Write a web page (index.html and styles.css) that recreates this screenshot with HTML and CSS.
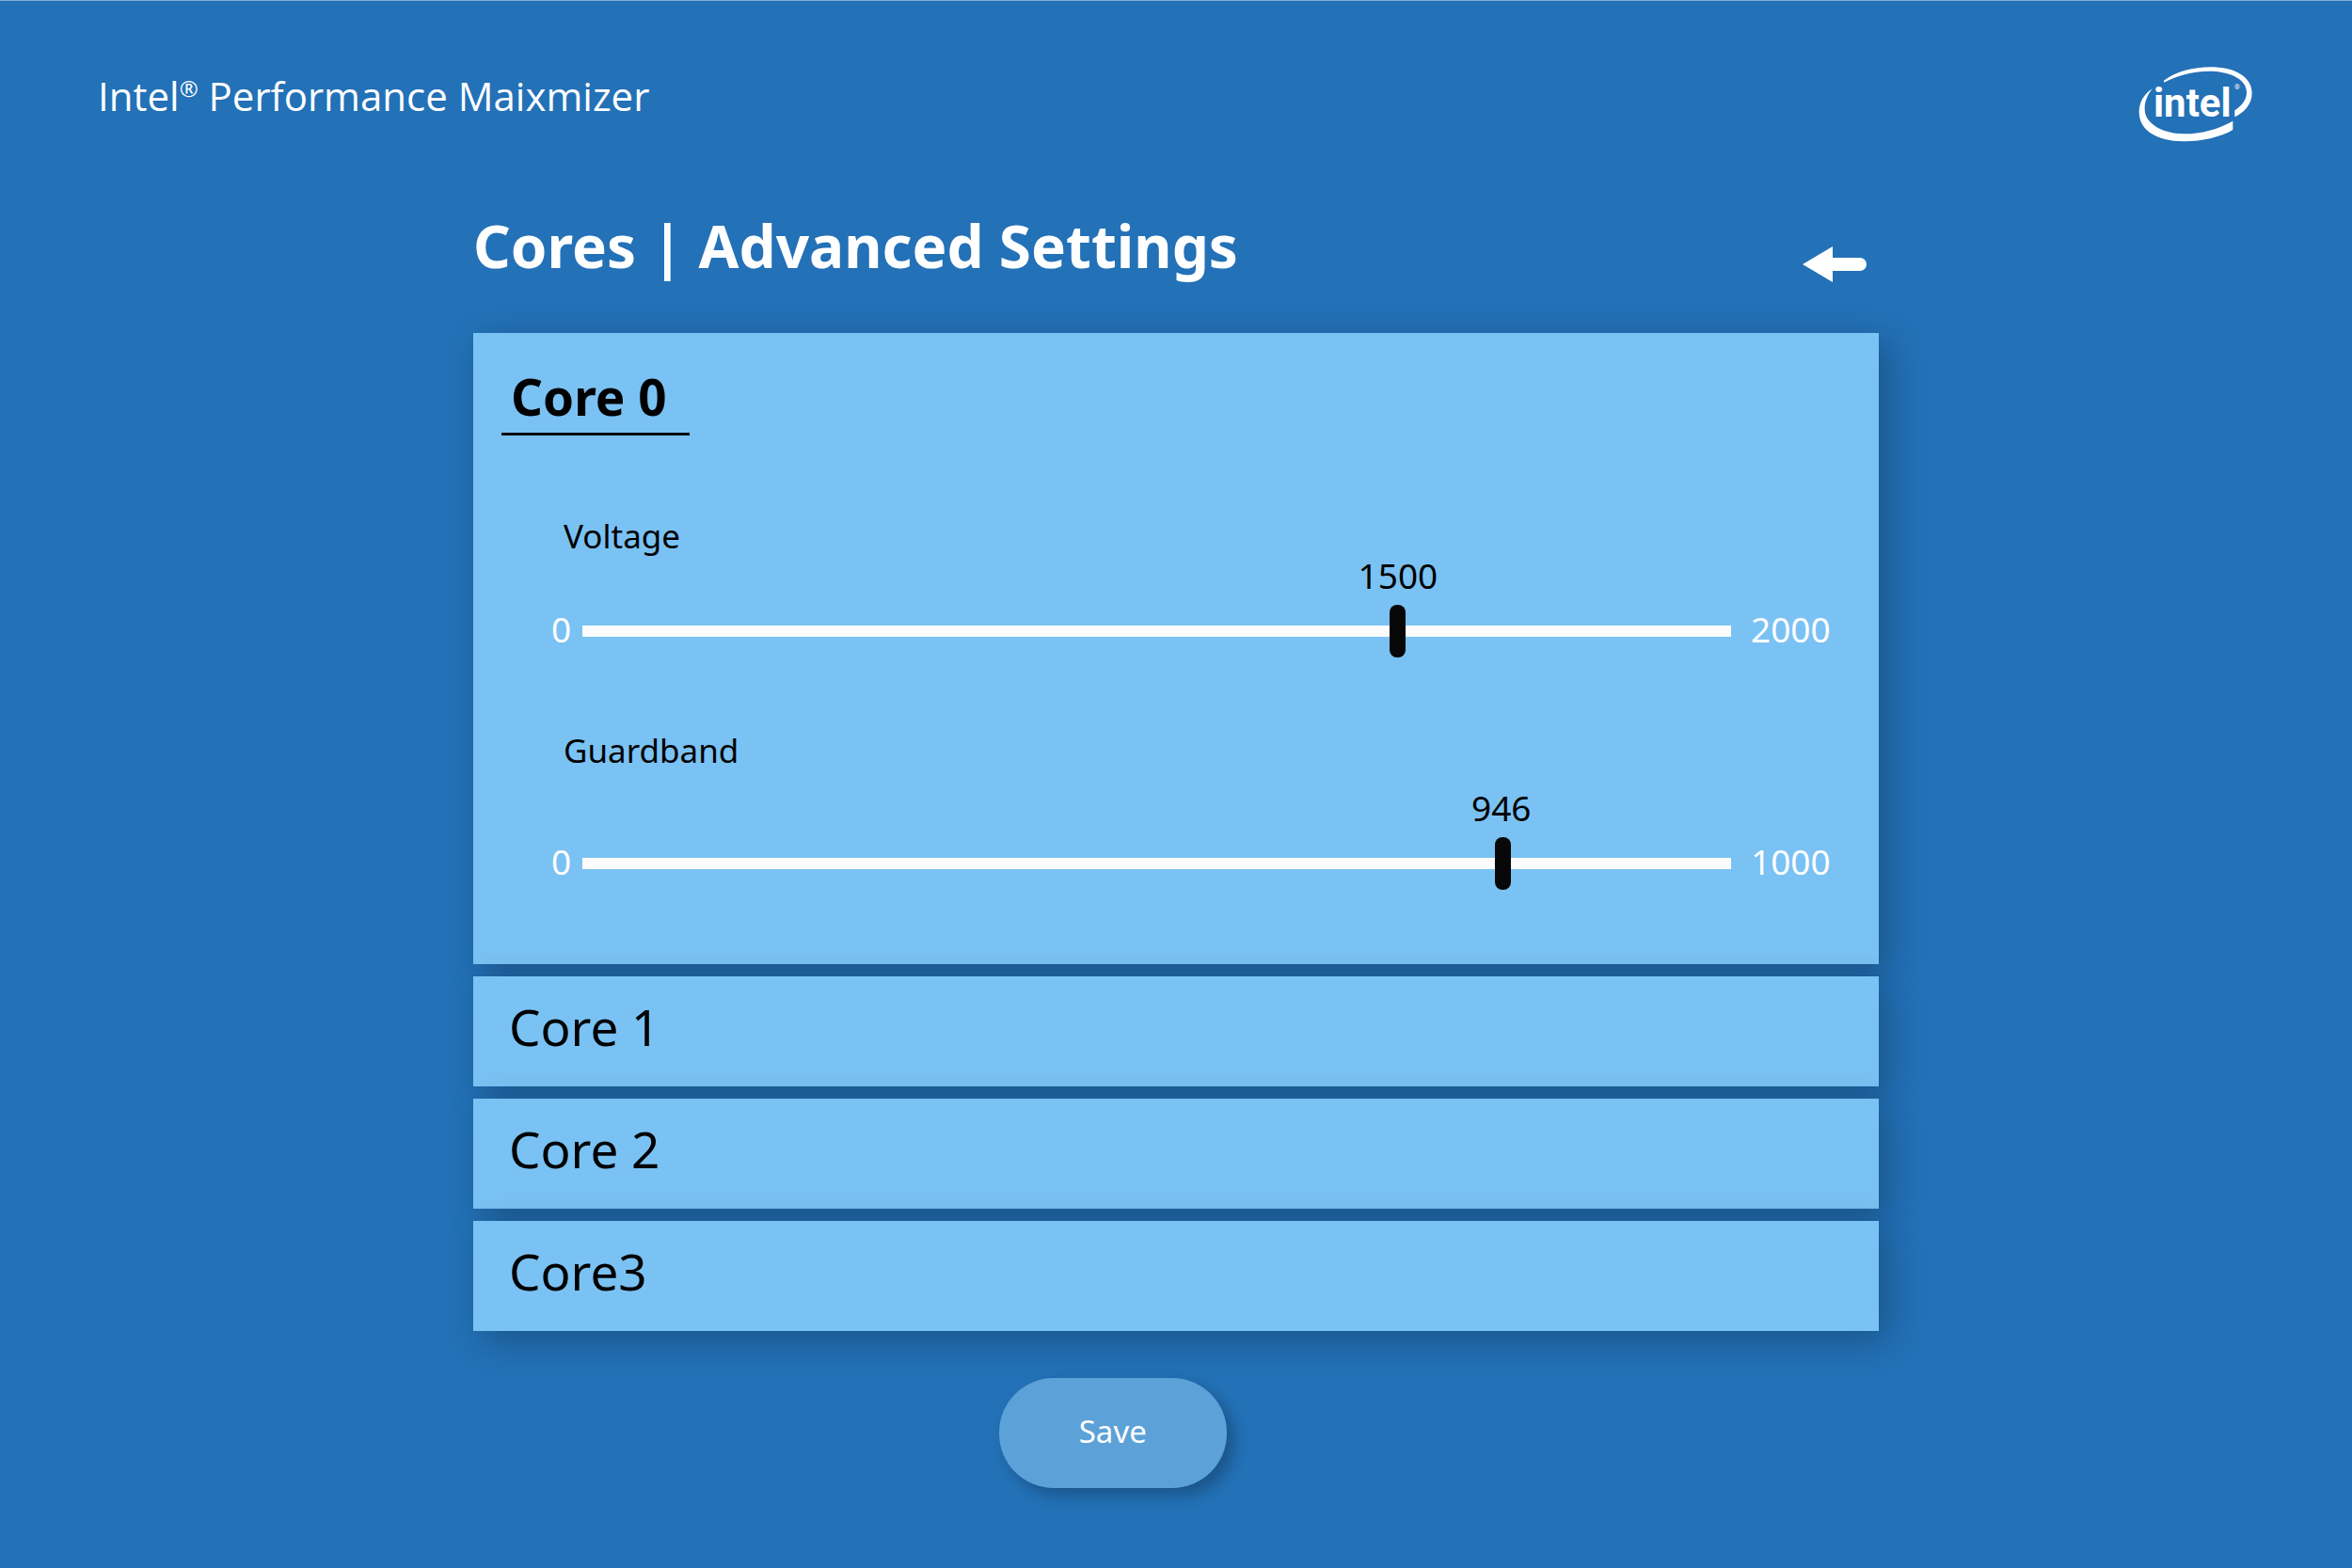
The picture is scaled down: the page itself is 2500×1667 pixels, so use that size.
FILE: index.html
```
<!DOCTYPE html>
<html lang="en">
<head>
  <meta charset="UTF-8" />
  <meta name="viewport" content="width=device-width, initial-scale=1" />
  <title>Intel Performance Maixmizer</title>
  <link rel="stylesheet" href="styles.css">
</head>
<body>
  <header class="topbar">
    <div class="app-name">Intel<sup>®</sup> Performance Maixmizer</div>
    <svg class="logo" viewBox="70 58 366 246" role="img" aria-label="Intel">
      <path d="M151 105C190 76 245 62 300 62C375 62 432 92 432 145C432 182 405 208 377 221V200C400 185 415 166 415 142C415 98 357 75 295 75C240 75 190 90 152 111Z" />
      <path d="M114 131C85 150 72 178 72 205C72 265 130 299 215 299C275 299 335 284 371 262V234C325 260 270 275 215 275C145 273 90 242 90 195C90 170 100 150 114 131Z" />
      <text class="logo-text" x="118" y="220">intel</text>
      <text class="logo-mark" x="376" y="133">®</text>
    </svg>
  </header>

  <main class="content">
    <div class="title-row">
      <h1>Cores | Advanced Settings</h1>
      <button class="back" type="button" aria-label="Back">
        <svg viewBox="0 0 68 38">
          <path d="M0 19L32 0V12H61A7 7 0 0 1 61 26H32V38Z" />
        </svg>
      </button>
    </div>

    <div class="cores">
      <section class="card open">
        <h2><button class="core-toggle" type="button" aria-expanded="true">Core 0</button></h2>

        <div class="setting">
          <label for="voltage">Voltage</label>
          <div class="slider">
            <span class="limit">0</span>
            <div class="track">
              <output for="voltage" style="left: 71%">1500</output>
              <input type="range" id="voltage" min="0" max="2105" value="1500">
            </div>
            <span class="limit max">2000</span>
          </div>
        </div>

        <div class="setting">
          <label for="guardband">Guardband</label>
          <div class="slider">
            <span class="limit">0</span>
            <div class="track">
              <output for="guardband" style="left: 80%">946</output>
              <input type="range" id="guardband" min="0" max="1174" value="946">
            </div>
            <span class="limit max">1000</span>
          </div>
        </div>
      </section>

      <section class="card">
        <h2><button class="core-toggle" type="button" aria-expanded="false">Core 1</button></h2>
      </section>
      <section class="card">
        <h2><button class="core-toggle" type="button" aria-expanded="false">Core 2</button></h2>
      </section>
      <section class="card">
        <h2><button class="core-toggle" type="button" aria-expanded="false">Core3</button></h2>
      </section>
    </div>

    <div class="actions">
      <button class="save" type="button">Save</button>
    </div>
  </main>
</body>
</html>
```
FILE: styles.css
```
* {
  box-sizing: border-box;
}

body {
  margin: 0;
  min-height: 100vh;
  border-top: 1px solid #80add6;
  background: #2371b7;
  color: #fff;
  font-family: "Noto Sans", "Open Sans", sans-serif;
  font-size: 35px;
  line-height: 48px;
}

button {
  padding: 0;
  border: none;
  background: none;
  color: inherit;
  font: inherit;
  cursor: pointer;
}

h1,
h2 {
  margin: 0;
}

/* header */
.topbar {
  display: flex;
  justify-content: space-between;
  align-items: flex-start;
  padding: 69px 105px 0 104px;
}

.app-name {
  font-family: "Open Sans", sans-serif;
  font-size: 42px;
  line-height: 64px;
}

.app-name sup {
  font-size: 24px;
  line-height: 0;
}

.logo {
  width: 122px;
  height: 82px;
  fill: #fff;
}

.logo-text {
  font-family: Roboto, sans-serif;
  font-size: 126px;
  font-weight: 700;
}

.logo-mark {
  font-family: Roboto, sans-serif;
  font-size: 22px;
}

/* page */
.content {
  width: 60%;
  margin: 0 auto;
  padding: 65px 3px 0;
}

.title-row {
  display: flex;
  justify-content: space-between;
  align-items: center;
  height: 137px;
  padding-bottom: 50px;
}

h1 {
  font-size: 62px;
  line-height: 90px;
  font-weight: 700;
}

.back {
  display: flex;
  margin: 40px 13px 0 0;
}

.back svg {
  width: 68px;
  height: 38px;
  fill: #fff;
}

/* accordion */
.cores {
  display: flex;
  flex-direction: column;
  gap: 13px;
}

.card {
  padding: 15px 52px 25px 38px;
  background: #7ac2f3;
  color: #000;
  box-shadow: 10px 10px 36px rgba(0, 0, 0, 0.25);
}

.card h2 {
  font-size: 53px;
  line-height: 77px;
  font-weight: 400;
}

.card.open {
  padding: 29px 52px 79px 30px;
}

.card.open h2 {
  margin-bottom: 8px;
  font-weight: 700;
}

.open .core-toggle {
  min-width: 200px;
  padding: 0 10px;
  border-bottom: 3px solid #0a0a0a;
  text-align: left;
}

.setting {
  padding: 75px 0 0 53px;
}

.setting label {
  display: block;
  padding-left: 13px;
}

.slider {
  display: flex;
  align-items: center;
  padding-top: 49px;
  color: #fff;
  font-size: 37px;
}

.setting + .setting .slider {
  padding-top: 68px;
}

.limit {
  width: 33px;
  padding-bottom: 5px;
}

.limit.max {
  width: 84px;
  margin-left: 21px;
}

.track {
  position: relative;
  display: flex;
  flex: 1;
}

output {
  position: absolute;
  bottom: 63px;
  color: #000;
  transform: translateX(-50%);
}

input[type="range"] {
  width: 100%;
  height: 56px;
  margin: 0;
  background: linear-gradient(#fcfcfc, #fcfcfc) center / 100% 12px no-repeat;
  appearance: none;
  cursor: pointer;
}

input[type="range"]::-webkit-slider-thumb {
  width: 17px;
  height: 56px;
  border-radius: 8px;
  background: #080808;
  appearance: none;
}

/* footer */
.actions {
  display: flex;
  justify-content: center;
  padding: 50px 9% 50px 0;
}

.save {
  width: 242px;
  height: 117px;
  padding-bottom: 4px;
  border-radius: 58px;
  background: #5ca1d7;
  box-shadow: 8px 8px 16px rgba(0, 0, 0, 0.25);
  font-size: 33px;
}
```
